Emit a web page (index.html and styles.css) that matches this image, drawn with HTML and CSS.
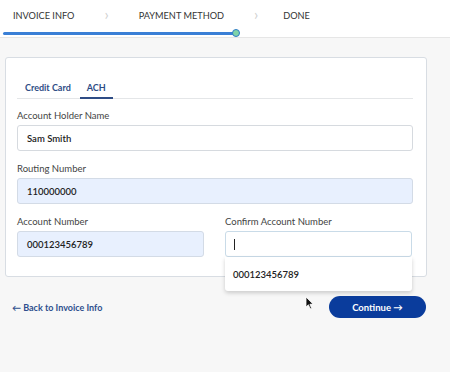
FILE: index.html
```html
<!DOCTYPE html>
<html lang="en">
<head>
    <meta charset="UTF-8">
    <title>Payment Method</title>
    <link rel="stylesheet" href="styles.css">
</head>
<body>
    <!-- Steps -->
    <div class="header">
        <div class="steps">
            <span class="step">Invoice Info</span>
            <span class="chev">&#8250;</span>
            <span class="step">Payment Method</span>
            <span class="chev">&#8250;</span>
            <span class="step last">Done</span>
        </div>
        <div class="track">
            <div class="fill"><span class="dot"></span></div>
        </div>
    </div>

    <!-- Payment card -->
    <div class="card">
        <div class="tabs">
            <span class="tab">Credit Card</span>
            <span class="tab active">ACH</span>
        </div>

        <div class="field">
            <label>Account Holder Name</label>
            <div class="input">Sam Smith</div>
        </div>
        <div class="field">
            <label>Routing Number</label>
            <div class="input filled">110000000</div>
        </div>
        <div class="row">
            <div class="field">
                <label>Account Number</label>
                <div class="input filled">000123456789</div>
            </div>
            <div class="field">
                <label>Confirm Account Number</label>
                <div class="input focus"><span class="caret"></span>
                    <div class="suggest">000123456789</div>
                </div>
            </div>
        </div>
    </div>

    <div class="actions">
        <a class="back">&larr; Back to Invoice Info</a>
        <button class="continue">Continue &rarr;</button>
        <svg class="cursor" width="9" height="14" viewBox="0 0 9 14">
            <path d="M1 1 L1 11 L3.4 8.8 L5.2 12.8 L6.6 12.2 L4.9 8.3 L8 8.1 Z" fill="#111" stroke="#fff" stroke-width="0.8"/>
        </svg>
    </div>
</body>
</html>
```

FILE: styles.css
```css
body {
    margin: 0;
    background: #f7f7f7;
    font-family: Lato, "Open Sans", sans-serif;
    color: #333;
}
.header {
    background: white;
    border-bottom: 1px solid #e6e6e6;
}
.steps {
    display: flex;
    align-items: center;
    gap: 30px;
    height: 31px;
    padding-left: 13px;
}
.step {
    font-size: 9.2px;
    text-transform: uppercase;
    color: #333;
}
.step.last {
    margin-left: -5px;
}
.chev {
    font-size: 15px;
    color: #d0d0d0;
    line-height: 1;
    margin-top: -2px;
}
.track {
    height: 5px;
    position: relative;
}
.fill {
    position: relative;
    margin-left: 3px;
    width: 233px;
    height: 3px;
    margin-top: 1px;
    background: #3a7fd6;
    border-radius: 2px;
}
.dot {
    position: absolute;
    right: -4px;
    top: -3px;
    width: 6px;
    height: 6px;
    border-radius: 50%;
    background: #7fd3a8;
    border: 1.5px solid #2f7cc8;
}
.card {
    margin: 19px 23px 0 5px;
    background: white;
    border: 1px solid #d8dde3;
    border-radius: 3px;
    padding: 19px 13px 19px 11px;
}
.tabs {
    display: flex;
    border-bottom: 1px solid #e4e6e8;
    margin-bottom: 11px;
}
.tab {
    font-size: 9px;
    font-weight: bold;
    color: #2e4c85;
    padding: 5px 8px 3px;
    line-height: 12px;
    border-bottom: 2px solid transparent;
    margin-bottom: -1px;
}
.tab.active {
    padding: 5px 7px 3px;
    margin-left: 1px;
    border-bottom-color: #2e4c85;
}
.field {
    display: flex;
    flex-direction: column;
    margin-bottom: 12px;
}
.field label {
    font-size: 9.5px;
    line-height: 12px;
    color: #444;
    margin-bottom: 3px;
}
.input {
    position: relative;
    height: 24px;
    border: 1px solid #d6dadf;
    border-radius: 3px;
    font-size: 9.5px;
    font-weight: 600;
    color: #222;
    padding-left: 9px;
    display: flex;
    align-items: center;
}
.input.filled {
    background: #e8f0fe;
    border-color: #d3dbe6;
}
.input.focus {
    border-color: #c9dbe8;
    padding-left: 8px;
}
.caret {
    width: 1px;
    height: 11px;
    background: #222;
}
.row {
    display: grid;
    grid-template-columns: 1fr 1fr;
    gap: 21px;
    margin-right: 1px;
}
.row .field {
    margin-bottom: 0;
}
.suggest {
    position: absolute;
    left: -1px;
    right: -1px;
    top: 100%;
    margin-top: 1px;
    height: 34px;
    background: white;
    border-radius: 0 0 3px 3px;
    box-shadow: 0 2px 4px rgba(0, 0, 0, 0.18);
    font-size: 9.5px;
    font-weight: 600;
    padding-left: 8px;
    display: flex;
    align-items: center;
    z-index: 2;
}
.actions {
    position: relative;
    display: flex;
    justify-content: space-between;
    align-items: center;
    padding: 0 24px 0 12px;
    margin-top: 19px;
}
.back {
    font-size: 9px;
    font-weight: bold;
    color: #2e4f8e;
}
.continue {
    width: 97px;
    height: 22px;
    border: none;
    border-radius: 11px;
    background: #0a3c9c;
    color: white;
    font-family: Lato, sans-serif;
    font-size: 9.5px;
    font-weight: bold;
}
.cursor {
    position: absolute;
    left: 305px;
    top: 0;
}
```
